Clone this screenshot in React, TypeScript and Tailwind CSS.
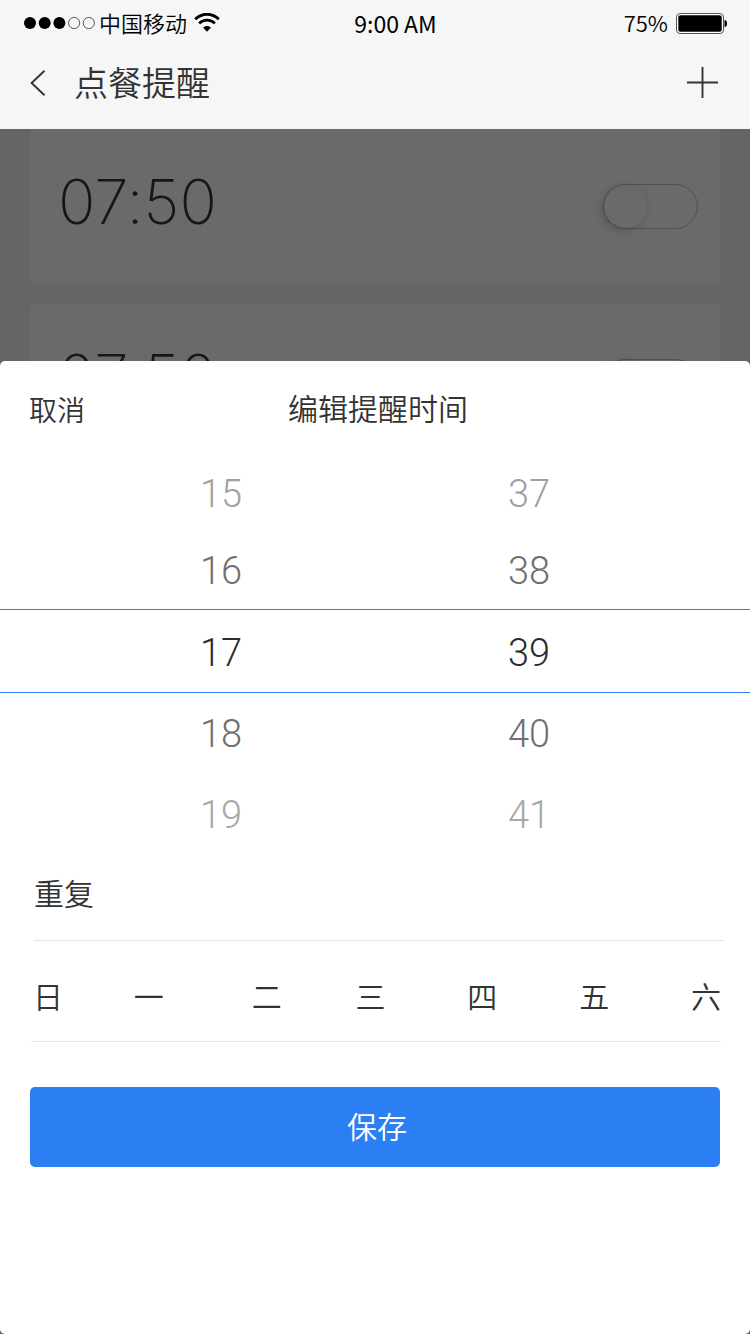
import { useState } from "react";

const HOURS = ["15", "16", "17", "18", "19"];
const MINUTES = ["37", "38", "39", "40", "41"];
const DAYS = ["日", "一", "二", "三", "四", "五", "六"];

const ROW_STYLES = [
  "h-[76px] text-[#a0a0a0]",
  "h-[77px] text-[#707070]",
  "h-[84px] border-y border-[#2b7ff2] pt-1 text-[#2c2c2c]",
  "h-[82px] text-[#707070]",
  "h-[80px] text-[#a8a8a8]",
];

function StatusBar() {
  return (
    <div className="grid h-[46px] grid-cols-3 items-center pl-6 pr-[23px] text-black">
      <div className="flex items-center">
        <svg width="72" height="14" viewBox="0 0 72 14" aria-hidden="true">
          <circle cx="6" cy="7" r="6" />
          <circle cx="20.7" cy="7" r="6" />
          <circle cx="35.4" cy="7" r="6" />
          <circle cx="50.1" cy="7" r="5.6" fill="none" stroke="#333" strokeWidth="0.8" />
          <circle cx="64.8" cy="7" r="5.6" fill="none" stroke="#333" strokeWidth="0.8" />
        </svg>
        <span className="ml-[3px] pb-0.5 text-[22px] font-[350] leading-none">中国移动</span>
        <svg className="ml-[7px]" width="26" height="20" viewBox="0 0 26 20" fill="none" stroke="black" aria-hidden="true">
          <path d="M1.2 6.2C8 -0.4 18 -0.4 24.8 6.2" strokeWidth="2.9" />
          <path d="M5.1 10.4C9.6 6 16.4 6 20.9 10.4" strokeWidth="2.7" />
          <path d="M9 14.6C11.3 12.3 14.7 12.3 17 14.6L13 18.8Z" fill="black" stroke="none" />
        </svg>
      </div>
      <span className="pl-10 text-center text-[23px] font-normal leading-none">9:00 AM</span>
      <div className="flex items-center justify-end gap-2">
        <span className="pb-0.5 text-[22px] font-[350] leading-none">75%</span>
        <svg width="51" height="21" viewBox="0 0 51 21" aria-hidden="true">
          <rect x="0.5" y="0.5" width="47" height="20" rx="3.5" fill="white" stroke="#555" />
          <rect x="2.3" y="2.3" width="43.4" height="16.4" rx="2" />
          <path d="M48.5 7C50.2 7 51 8.5 51 10.5S50.2 14 48.5 14Z" />
        </svg>
      </div>
    </div>
  );
}

function Header() {
  return (
    <header className="bg-[#f6f6f6] text-[#333]">
      <StatusBar />
      <div className="flex h-[83px] items-start pl-[30px] pr-8">
        <button type="button" aria-label="返回" className="mt-6">
          <svg width="16" height="26" viewBox="0 0 16 26" fill="none" stroke="#333" strokeWidth="1.9" className="block">
            <path d="M14.5 0.8L1.6 13L14.5 25.2" />
          </svg>
        </button>
        <h1 className="ml-7 mt-[11px] text-[34px] font-[350] leading-[50px]">点餐提醒</h1>
        <button type="button" aria-label="添加" className="ml-auto mt-[21px]">
          <svg width="31" height="31" viewBox="0 0 31 31" stroke="#333" strokeWidth="1.9" className="block">
            <path d="M0 15.5H31M15.5 0V31" />
          </svg>
        </button>
      </div>
    </header>
  );
}

function ReminderCard({ time }: { time: string }) {
  return (
    <li className="flex h-[155px] shrink-0 items-start justify-between rounded-[5px] bg-[#6a6a6a] pl-7 pr-[22px]">
      <span className="mt-9 font-['Inter'] text-[62px] font-extralight leading-[73px] text-[#161616] [font-feature-settings:'calt'_0]">
        {time}
      </span>
      <input
        type="checkbox"
        role="switch"
        aria-label={time}
        className="mt-[55px] h-[45px] w-[95px] appearance-none rounded-full border border-[#505050] before:block before:size-[43px] before:rounded-full before:bg-[#6a6a6a] before:shadow-[-2px_2px_8px_rgba(0,0,0,0.2)]"
      />
    </li>
  );
}

function TimePicker() {
  const [hour, setHour] = useState("17");
  const [minute, setMinute] = useState("39");
  return (
    <div className="font-['Roboto'] text-[38px] font-light leading-none">
      {HOURS.map((h, i) => (
        <div key={h} className={`grid grid-cols-2 items-center px-[67px] ${ROW_STYLES[i]}`}>
          <button type="button" aria-pressed={hour === h} onClick={() => setHour(h)}>
            {h}
          </button>
          <button type="button" aria-pressed={minute === MINUTES[i]} onClick={() => setMinute(MINUTES[i])}>
            {MINUTES[i]}
          </button>
        </div>
      ))}
    </div>
  );
}

export default function App() {
  return (
    <div className="flex min-h-screen flex-col bg-[#656565] font-['Noto_Sans_CJK_SC',sans-serif]">
      <Header />
      <ul className="flex h-[232px] flex-col gap-5 overflow-hidden px-[30px]">
        <ReminderCard time="07:50" />
        <ReminderCard time="07:50" />
      </ul>
      <section role="dialog" aria-labelledby="sheet-title" className="flex-1 rounded-[5px] bg-white font-[350] text-[#333]">
        <div className="grid h-[95px] grid-cols-[1fr_auto_1fr] items-center px-[29px]">
          <button type="button" className="justify-self-start text-[28px] leading-[42px]">取消</button>
          <h2 id="sheet-title" className="pb-1 pl-1.5 text-[30px] font-[350] leading-[44px]">编辑提醒时间</h2>
        </div>
        <TimePicker />
        <h3 className="ml-[34px] mr-[26px] flex h-[86px] items-center border-b border-[#e4e4e4] pb-3 text-[30px] font-[350] leading-[44px]">
          重复
        </h3>
        <div className="ml-[31px] mr-[29px] grid h-[101px] grid-cols-[101fr_118fr_104fr_112fr_112fr_112fr_30px] items-center border-b border-[#e4e4e4] pl-0.5 pt-2 text-[30px] leading-[44px]">
          {DAYS.map((day) => (
            <button key={day} type="button" className="justify-self-start">
              {day}
            </button>
          ))}
        </div>
        <div className="px-[30px] pb-10 pt-[45px]">
          <button type="button" className="h-20 w-full rounded-[5px] bg-[#2b7ff2] pb-1 pl-1 text-[30px] text-white">
            保存
          </button>
        </div>
      </section>
    </div>
  );
}
